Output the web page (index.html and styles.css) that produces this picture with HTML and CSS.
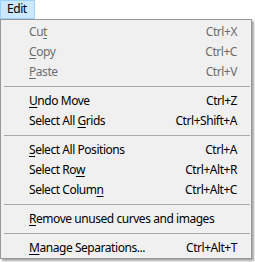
FILE: index.html
```html
<!DOCTYPE html>
<html lang="en">
<head>
    <meta charset="UTF-8">
    <title>Edit menu</title>
    <link rel="stylesheet" href="styles.css">
</head>
<body>

    <div class="menubar">
        <span class="menu-title active">Edit</span>
    </div>

    <div class="popup">
        <div class="item disabled"><span class="label">Cu<u>t</u></span><span class="key">Ctrl+X</span></div>
        <div class="item disabled"><span class="label"><u>C</u>opy</span><span class="key">Ctrl+C</span></div>
        <div class="item disabled"><span class="label"><u>P</u>aste</span><span class="key">Ctrl+V</span></div>
        <div class="sep"></div>
        <div class="item"><span class="label"><u>U</u>ndo Move</span><span class="key">Ctrl+Z</span></div>
        <div class="item"><span class="label">Select All <u>G</u>rids</span><span class="key">Ctrl+Shift+A</span></div>
        <div class="sep"></div>
        <div class="item"><span class="label"><u>S</u>elect All Positions</span><span class="key">Ctrl+A</span></div>
        <div class="item"><span class="label">Select Ro<u>w</u></span><span class="key">Ctrl+Alt+R</span></div>
        <div class="item"><span class="label">Select Colum<u>n</u></span><span class="key">Ctrl+Alt+C</span></div>
        <div class="sep"></div>
        <div class="item"><span class="label"><u>R</u>emove unused curves and images</span><span class="key"></span></div>
        <div class="sep"></div>
        <div class="item"><span class="label"><u>M</u>anage Separations...</span><span class="key">Ctrl+Alt+T</span></div>
    </div>

</body>
</html>
```

FILE: styles.css
```css
*
{
    padding: 0;
    margin: 0;
    box-sizing: border-box;
}

body
{
    width: 255px;
    height: 262px;
    background: white;
    font-family: "Noto Sans", "Open Sans", sans-serif;
    font-size: 12px;
    letter-spacing: -0.45px;
    color: black;
    overflow: hidden;
}

.menubar
{
    display: flex;
    height: 19px;
}

.menu-title
{
    display: block;
    height: 19px;
    padding: 0 7px 0 6px;
    line-height: 16px;
    border: 1px solid transparent;
}

.menu-title.active
{
    background: #cce8ff;
    border-color: #99d1ff;
}

.popup
{
    width: 252px;
    background: #f0f0f0;
    border: 1px solid #979797;
    padding: 2px 0 0 0;
    box-shadow: 2px 2px 2px rgba(0, 0, 0, 0.35);
}

.item
{
    display: flex;
    justify-content: space-between;
    height: 20px;
    line-height: 20px;
    padding: 0 14px 0 28px;
}

.item u
{
    text-underline-offset: 2px;
}

.item.disabled
{
    color: #6d6d6d;
}

.sep
{
    height: 9px;
    margin: 0 1px 0 3px;
    display: flex;
    align-items: center;
}

.sep::after
{
    content: "";
    display: block;
    width: 100%;
    height: 1px;
    background: #a8a8a8;
}
```
